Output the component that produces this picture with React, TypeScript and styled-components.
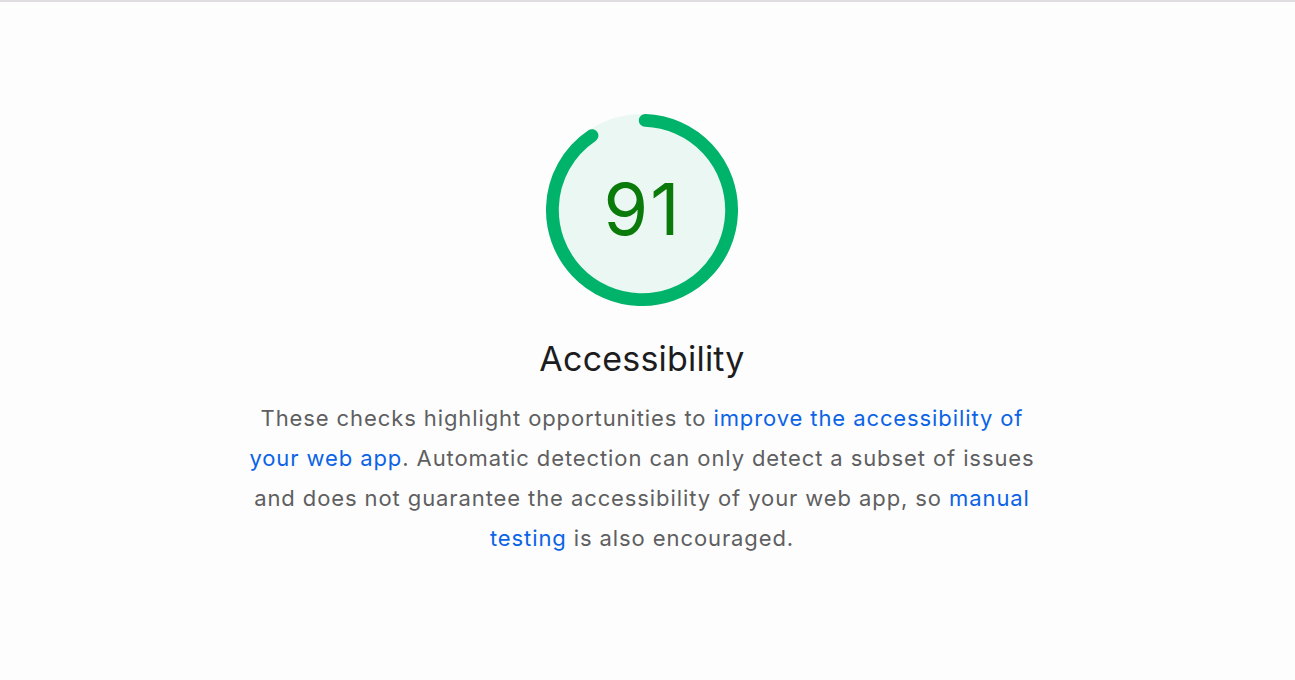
import React from "react";
import styled, { createGlobalStyle } from "styled-components";

const GlobalStyle = createGlobalStyle`
  html, body {
    margin: 0;
    padding: 0;
    background: #fdfdfd;
  }
  body {
    font-family: Inter, "Noto Sans", "Liberation Sans", sans-serif;
    -webkit-font-smoothing: antialiased;
  }
`;

const Page = styled.main`
  box-sizing: border-box;
  min-height: 680px;
  border-top: 2px solid #dfdde0;
  padding: 112px 11px 0 0;
  display: flex;
  flex-direction: column;
  align-items: center;
`;

const GaugeWrap = styled.div`
  position: relative;
  width: 192px;
  height: 192px;
`;

const GaugeSvg = styled.svg`
  display: block;
  width: 192px;
  height: 192px;
`;

const Score = styled.div`
  position: absolute;
  inset: 0;
  display: flex;
  align-items: center;
  justify-content: center;
  padding-left: 1px;
  padding-bottom: 2px;
  font-size: 72px;
  line-height: 1;
  color: #0a7a0a;
  letter-spacing: 2px;
`;

const Title = styled.h2`
  margin: 33px 0 0;
  font-size: 34px;
  font-weight: 400;
  line-height: 40px;
  color: #1d1d1f;
  letter-spacing: 0.2px;
`;

const Description = styled.p`
  margin: 19px 0 0;
  max-width: 800px;
  font-size: 22px;
  line-height: 40px;
  color: #5f5f61;
  text-align: center;
  letter-spacing: 0.9px;
`;

const Link = styled.a`
  color: #0b63e6;
  text-decoration: none;
`;

type GaugeProps = { score: number };

function Gauge({ score }: GaugeProps) {
  const r = 56;
  const stroke = 8;
  const circumference = 2 * Math.PI * r;
  const rotation = -90 + ((0.25 * stroke) / circumference) * 360;
  const arcLength = Math.max((score / 100) * circumference - stroke / 2, 0.0001);
  return (
    <GaugeWrap>
      <GaugeSvg viewBox="0 0 120 120">
        <circle
          cx="60"
          cy="60"
          r={r}
          fill="#00b36b"
          stroke="#00b36b"
          strokeWidth={stroke}
          opacity={0.07}
        />
        <circle
          cx="60"
          cy="60"
          r={r}
          fill="none"
          stroke="#00b36b"
          strokeWidth={stroke}
          strokeLinecap="round"
          strokeDasharray={`${arcLength} ${circumference}`}
          transform={`rotate(${rotation} 60 60)`}
        />
      </GaugeSvg>
      <Score>{score}</Score>
    </GaugeWrap>
  );
}

export default function App() {
  return (
    <>
      <GlobalStyle />
      <Page>
        <Gauge score={91} />
        <Title>Accessibility</Title>
        <Description>
          These checks highlight opportunities to{" "}
          <Link href="#">improve the accessibility of your web app</Link>.
          Automatic detection can only detect a subset of issues and does not
          guarantee the accessibility of your web app, so{" "}
          <Link href="#">manual testing</Link> is also encouraged.
        </Description>
      </Page>
    </>
  );
}
